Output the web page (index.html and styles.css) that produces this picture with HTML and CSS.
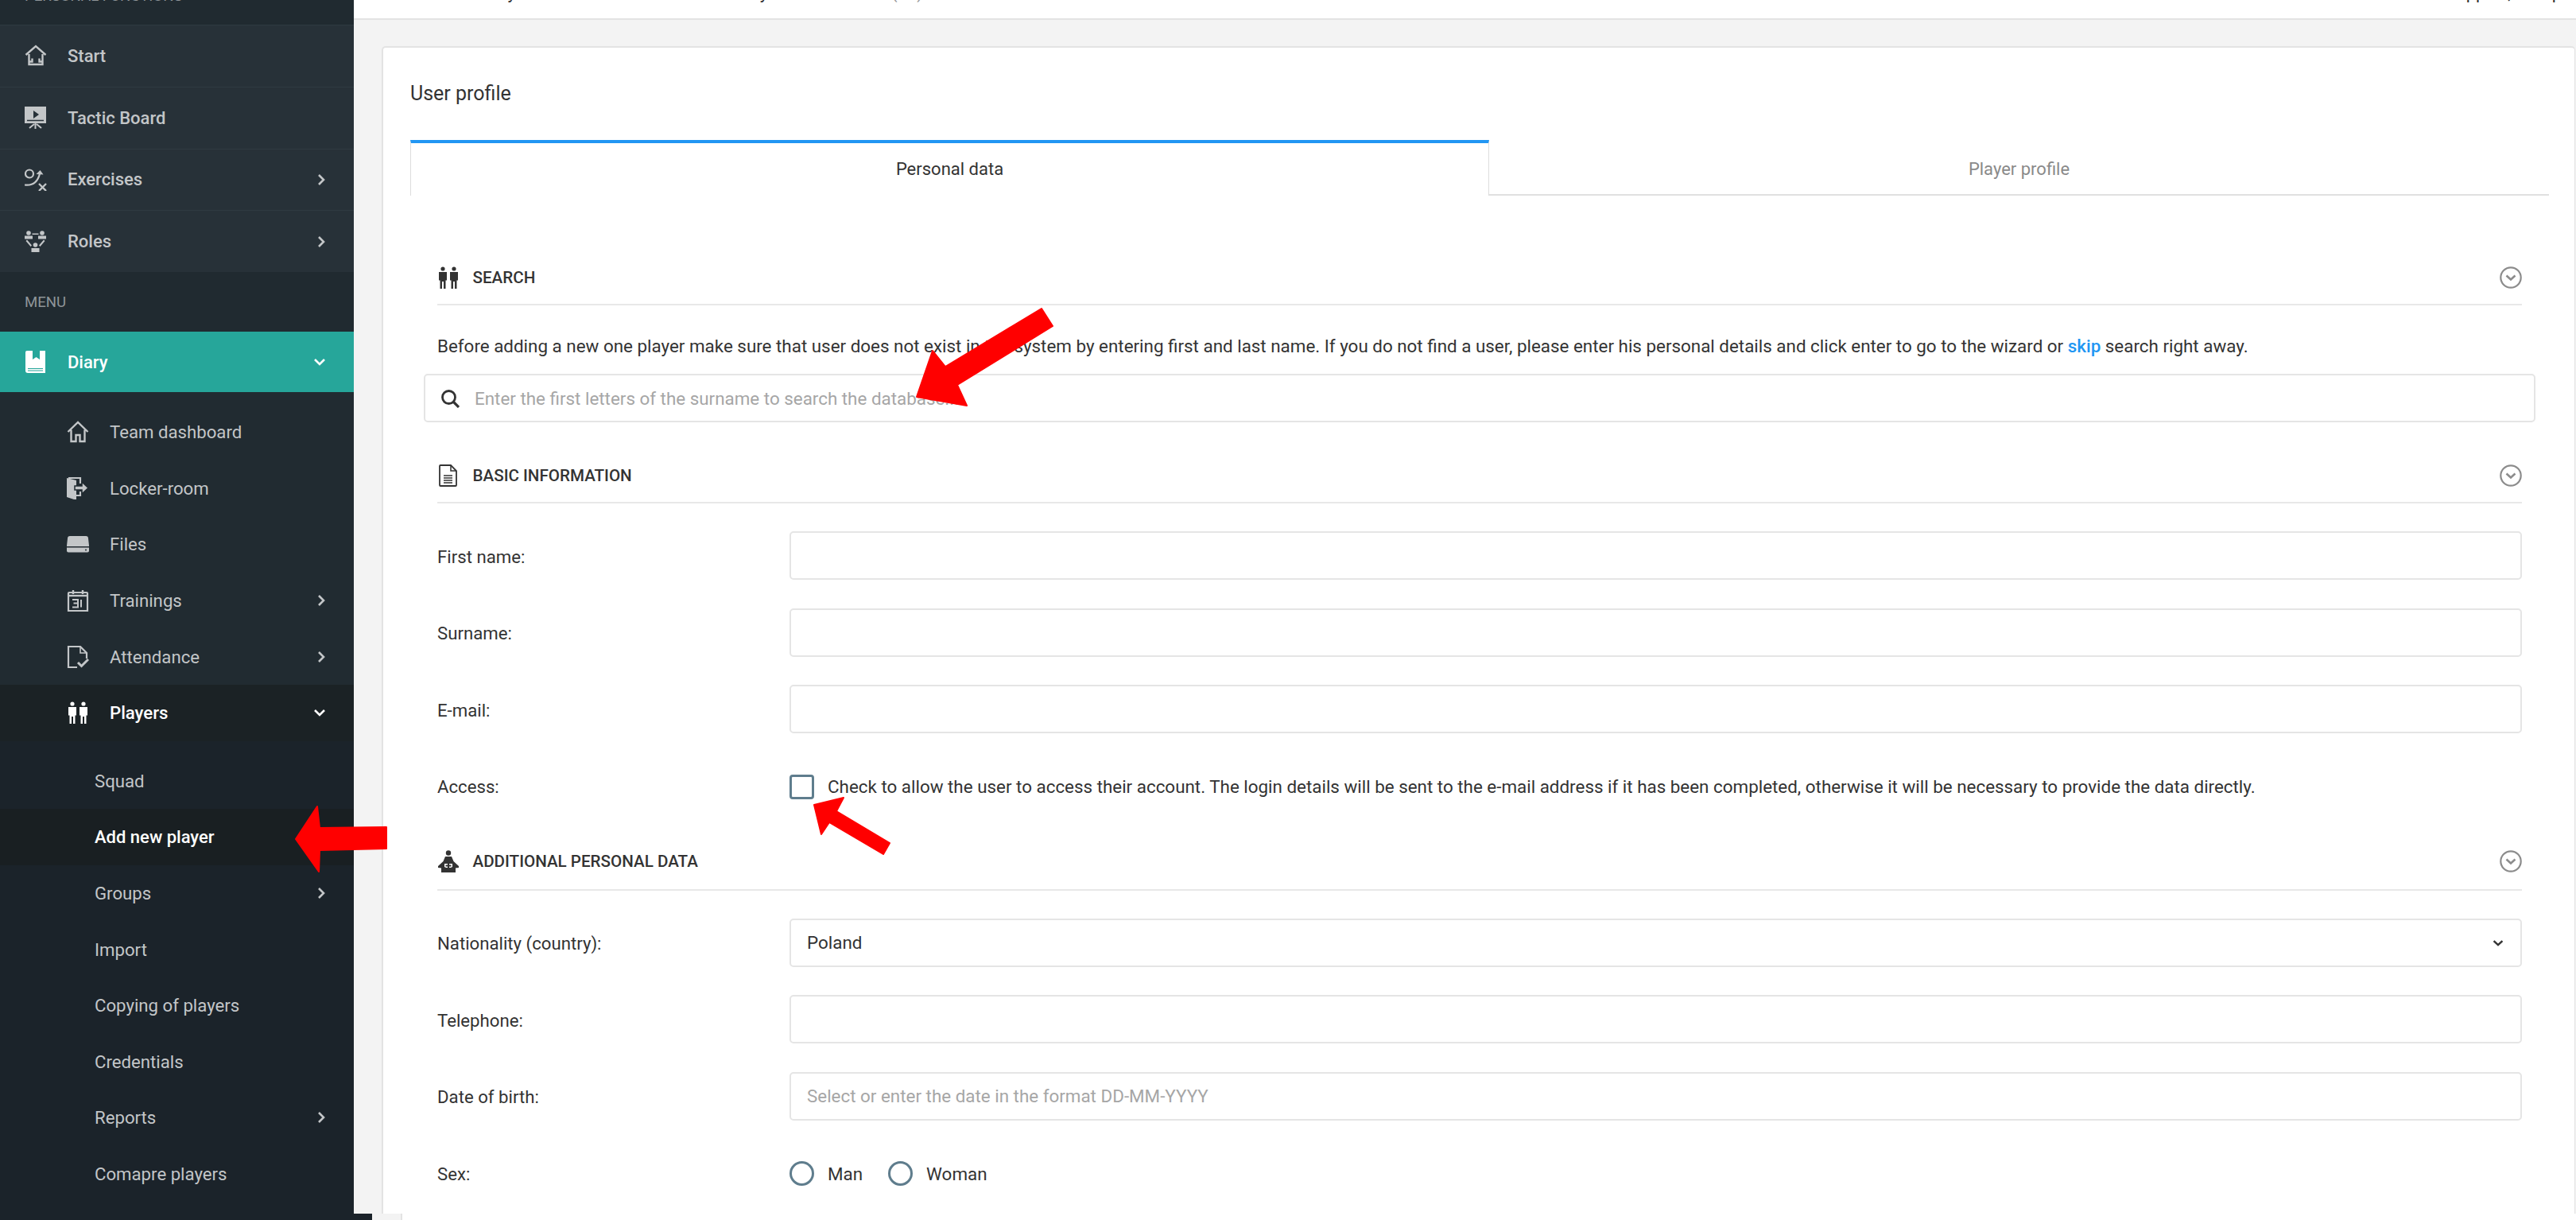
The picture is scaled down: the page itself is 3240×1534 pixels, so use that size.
FILE: index.html
```html
<!DOCTYPE html>
<html lang="en">
<head>
    <meta charset="UTF-8">
    <title>User profile</title>
    <link rel="stylesheet" href="styles.css">
</head>
<body>
    <svg class="icon-defs" width="0" height="0">
        <symbol id="i-people" viewBox="0 0 28 28">
            <circle cx="7" cy="3" r="2.6"/><circle cx="21" cy="3" r="2.6"/>
            <path d="M2 7h10v10.500h-1.500V28H8v-9H6v9H3.500V17.500H2zM16 7h10v10.500h-1.500V28H22v-9h-2v9h-2.500V17.500H16z"/>
        </symbol>
        <symbol id="i-right" viewBox="0 0 12 18">
            <path d="M3 3l6 6-6 6" fill="none" stroke="currentColor" stroke-width="2.600"/>
        </symbol>
        <symbol id="i-down" viewBox="0 0 18 12">
            <path d="M3 3l6 6 6-6" fill="none" stroke="currentColor" stroke-width="2.600"/>
        </symbol>
        <symbol id="i-collapse" viewBox="0 0 28 28">
            <circle cx="14" cy="14" r="12.700" fill="none" stroke="#8c8c8c" stroke-width="2.200"/>
            <path d="M8.500 11.500l5.500 5 5.500-5" fill="none" stroke="#8c8c8c" stroke-width="2.600"/>
        </symbol>
    </svg>

    <div class="layout">
        <aside class="sidebar">
            <div class="nav-head nav-head-cut"><span>PERSONAL FUNCTIONS</span></div>
            <a class="nav-item">
                <svg class="nav-icon" viewBox="0 0 28 28"><path d="M1.500 13L14 2l12.500 11M5.500 12v13h17V12M5.500 21.500h4v-4M22.500 21.500h-4v-4" fill="none" stroke="currentColor" stroke-width="2.400"/></svg>
                <span>Start</span>
            </a>
            <a class="nav-item">
                <svg class="nav-icon" viewBox="0 0 28 28"><path d="M0 0h27v21H0z" fill="currentColor"/><path d="M11 5l7 5-7 5z" fill="#273138"/><path d="M3 17.500h21" stroke="#273138" stroke-width="1.500"/><path d="M13.500 21v7M12 22l-6 5M15 22l6 5" stroke="currentColor" stroke-width="2" fill="none"/></svg>
                <span>Tactic Board</span>
            </a>
            <a class="nav-item">
                <svg class="nav-icon" viewBox="0 0 28 28"><circle cx="6" cy="6.500" r="5" fill="none" stroke="currentColor" stroke-width="2.200"/><path d="M0 20.500c8 1 16-2 19-14" fill="none" stroke="currentColor" stroke-width="2.200"/><path d="M14.500 7l5-5 4 5.500z" fill="currentColor"/><path d="M18 19l9 9M27 19l-9 9" stroke="currentColor" stroke-width="2.400"/></svg>
                <span>Exercises</span>
                <svg class="nav-arrow"><use href="#i-right"/></svg>
            </a>
            <a class="nav-item">
                <svg class="nav-icon" viewBox="0 0 28 28"><g fill="currentColor"><circle cx="5" cy="3" r="2.800"/><circle cx="22" cy="3" r="2.800"/><circle cx="13.500" cy="18" r="2.800"/><path d="M0 6.500h10v4H0zM17 6.500h10v4H17zM8.500 22h10v5h-10z"/><path d="M9.500 3.500h8v1.500h-8zM3 11.500l6 7-1.500 1.500-6-7zM24 11.500l-6 7 1.500 1.500 6-7z"/></g></svg>
                <span>Roles</span>
                <svg class="nav-arrow"><use href="#i-right"/></svg>
            </a>
            <div class="nav-head"><span>MENU</span></div>
            <a class="nav-item nav-item-open">
                <svg class="nav-icon" viewBox="0 0 28 28"><path d="M3 0h23v28H4a3 3 0 0 1-3-3V2a2 2 0 0 1 2-2z" fill="#fff"/><path d="M10 0h9v11l-4.500-3-4.500 3z" fill="#26a69a"/><path d="M4 22.500h19M4 25h19" stroke="#26a69a" stroke-width="1.200"/></svg>
                <span>Diary</span>
                <svg class="nav-arrow-down"><use href="#i-down"/></svg>
            </a>
            <div class="sub-nav">
                <a class="sub-item">
                    <svg class="nav-icon" viewBox="0 0 28 28"><path d="M1.500 14L14 2l12.500 12M5.500 11.500V26h6v-8h5v8h6V11.500" fill="none" stroke="currentColor" stroke-width="2.400"/></svg>
                    <span>Team dashboard</span>
                </a>
                <a class="sub-item">
                    <svg class="nav-icon" viewBox="0 0 28 28"><path d="M0 1v24l12 4V4z" fill="currentColor"/><path d="M2 1h15v7M17 18v5h-5" fill="none" stroke="currentColor" stroke-width="2.200"/><path d="M10 11h9V6l8 7.500-8 7.500v-5h-9z" fill="currentColor" stroke="#212b31" stroke-width="1.500"/></svg>
                    <span>Locker-room</span>
                </a>
                <a class="sub-item">
                    <svg class="nav-icon" viewBox="0 0 28 28"><path d="M4 4h20a3 3 0 0 1 3 3l1 9v1H0v-1l1-9a3 3 0 0 1 3-3z" fill="currentColor"/><path d="M0 18.500h28v4a2 2 0 0 1-2 2H2a2 2 0 0 1-2-2z" fill="currentColor"/><circle cx="24" cy="21.500" r="1" fill="#212b31"/></svg>
                    <span>Files</span>
                </a>
                <a class="sub-item sub-item-arrow">
                    <svg class="nav-icon" viewBox="0 0 28 28"><path d="M3 4h22a1 1 0 0 1 1 1v22H2V5a1 1 0 0 1 1-1z" fill="none" stroke="currentColor" stroke-width="2.200"/><path d="M8 1v5M20 1v5" stroke="currentColor" stroke-width="2.400"/><path d="M2 8h24" stroke="currentColor" stroke-width="2.400"/><path d="M7 13h7v9.500H7M8.500 17.500H14M18 13v9.500" fill="none" stroke="currentColor" stroke-width="2"/></svg>
                    <span>Trainings</span>
                    <svg class="nav-arrow"><use href="#i-right"/></svg>
                </a>
                <a class="sub-item sub-item-arrow">
                    <svg class="nav-icon" viewBox="0 0 28 28"><path d="M13 27H2V1h15l8 8v7" fill="none" stroke="currentColor" stroke-width="2.200"/><path d="M17 1v8h8" fill="none" stroke="currentColor" stroke-width="1.600"/><path d="M14 21l4.500 4.500L27 17" fill="none" stroke="currentColor" stroke-width="3"/></svg>
                    <span>Attendance</span>
                    <svg class="nav-arrow"><use href="#i-right"/></svg>
                </a>
                <a class="sub-item sub-item-current">
                    <svg class="nav-icon"><use href="#i-people"/></svg>
                    <span>Players</span>
                    <svg class="nav-arrow-down"><use href="#i-down"/></svg>
                </a>
                <div class="sub-sub-nav">
                    <a class="leaf-item"><span>Squad</span></a>
                    <a class="leaf-item leaf-item-active"><span>Add new player</span></a>
                    <a class="leaf-item"><span>Groups</span><svg class="nav-arrow"><use href="#i-right"/></svg></a>
                    <a class="leaf-item"><span>Import</span></a>
                    <a class="leaf-item"><span>Copying of players</span></a>
                    <a class="leaf-item"><span>Credentials</span></a>
                    <a class="leaf-item"><span>Reports</span><svg class="nav-arrow"><use href="#i-right"/></svg></a>
                    <a class="leaf-item"><span>Comapre players</span></a>
                </div>
            </div>
        </aside>

        <main class="main">
            <header class="topbar">
                <div class="crumbs">
                    <span class="crumb-a">Diary</span>
                    <span class="crumb-b">Team Diary</span>
                    <span class="crumb-c">(12)</span>
                </div>
                <span class="top-help">Support, Help</span>
            </header>

            <div class="card">
                <h1 class="card-title">User profile</h1>
                <div class="tabs">
                    <div class="tab tab-active">Personal data</div>
                    <div class="tab tab-other">Player profile</div>
                </div>

                <section class="section">
                    <div class="section-head">
                        <svg class="head-icon"><use href="#i-people"/></svg>
                        <span class="head-text">SEARCH</span>
                        <svg class="head-toggle"><use href="#i-collapse"/></svg>
                    </div>
                    <p class="search-note">Before adding a new one player make sure that user does not exist in the system by entering first and last name. If you do not find a user, please enter his personal details and click enter to go to the wizard or <a class="link">skip</a> search right away.</p>
                    <div class="search-box">
                        <svg class="search-icon" viewBox="0 0 24 24"><circle cx="10.500" cy="10.500" r="8" fill="none" stroke="#333" stroke-width="2.800"/><path d="M16 16l7 7" stroke="#333" stroke-width="3.200"/></svg>
                        <input class="search-input" type="text" placeholder="Enter the first letters of the surname to search the database...">
                    </div>

                    <div class="section-head section-head-next">
                        <svg class="head-icon" viewBox="0 0 28 28"><path d="M4 1h13l7 7v18a1 1 0 0 1-1 1H4a1 1 0 0 1-1-1V2a1 1 0 0 1 1-1z" fill="none" stroke="#333" stroke-width="1.800"/><path d="M17 1v7h7" fill="none" stroke="#333" stroke-width="1.500"/><path d="M8 14h11M8 17h11M8 20h11M8 23h11" stroke="#333" stroke-width="1.500"/></svg>
                        <span class="head-text">BASIC INFORMATION</span>
                        <svg class="head-toggle"><use href="#i-collapse"/></svg>
                    </div>
                    <div class="fields">
                        <label class="field-label">First name:</label>
                        <input class="field-input" type="text">
                        <label class="field-label">Surname:</label>
                        <input class="field-input" type="text">
                        <label class="field-label">E-mail:</label>
                        <input class="field-input" type="text">
                        <label class="field-label">Access:</label>
                        <div class="field-check">
                            <input class="check-box" type="checkbox">
                            <span>Check to allow the user to access their account. The login details will be sent to the e-mail address if it has been completed, otherwise it will be necessary to provide the data directly.</span>
                        </div>
                    </div>

                    <div class="section-head section-head-last">
                        <svg class="head-icon" viewBox="0 0 28 28"><circle cx="14" cy="3.500" r="3.200" fill="#333"/><path d="M10 8h8l2.500 6L27 20v2l-4 .5V28H5v-5.500L1 22v-2l6.500-6z" fill="#333"/><path d="M9 17h10v4l-2 1h-6l-2-1z" fill="#fff"/><path d="M14 16v8M10.500 19.500h7" stroke="#333" stroke-width="2"/></svg>
                        <span class="head-text">ADDITIONAL PERSONAL DATA</span>
                        <svg class="head-toggle"><use href="#i-collapse"/></svg>
                    </div>
                    <div class="fields">
                        <label class="field-label">Nationality (country):</label>
                        <div class="select-wrap">
                            <select class="field-input field-select"><option>Poland</option></select>
                            <svg class="select-arrow" viewBox="0 0 18 12"><path d="M2.500 2.500L9 8.500l6.500-6" fill="none" stroke="#333" stroke-width="3"/></svg>
                        </div>
                        <label class="field-label">Telephone:</label>
                        <input class="field-input" type="text">
                        <label class="field-label">Date of birth:</label>
                        <input class="field-input" type="text" placeholder="Select or enter the date in the format DD-MM-YYYY">
                        <label class="field-label">Sex:</label>
                        <div class="field-radios">
                            <input class="radio-dot" type="radio" name="sex"><span>Man</span>
                            <input class="radio-dot radio-second" type="radio" name="sex"><span>Woman</span>
                        </div>
                    </div>
                </section>
            </div>
        </main>
    </div>

    <div class="bottom-strip">
        <div class="strip-dark"></div>
        <div class="strip-gray"></div>
    </div>

    <!-- red annotation arrows drawn over the screenshot -->
    <svg class="arrows" viewBox="0 0 3240 1534">
        <polygon points="1153,499 1173,441 1189,461 1310,388 1324,410 1204,484 1216,510"/>
        <polygon points="1024,1012 1061,1003 1052,1020 1119,1060 1111,1074 1043,1034 1033,1049"/>
        <polygon points="372,1055 399,1014 402,1041 486,1040 486,1067 402,1069 401,1096"/>
    </svg>
</body>
</html>
```

FILE: styles.css
```css
html, body {
    margin: 0;
    padding: 0;
    height: 1534px;
    overflow: hidden;
    background: #fff;
}
body {
    position: relative;
    font-family: Roboto, "Liberation Sans", sans-serif;
    font-size: 22px;
    color: #333;
}
.icon-defs {
    position: absolute;
}
.layout {
    display: flex;
    height: 1526px;
    overflow: hidden;
}

/* sidebar */
.sidebar {
    width: 445px;
    flex: none;
    background: #1b232a;
    color: #c3c6c8;
    font-size: 22.200px;
    overflow: hidden;
}
.nav-head {
    height: 75px;
    box-sizing: border-box;
    padding-left: 31px;
    display: flex;
    align-items: center;
    background: #202a30;
    color: #8f9599;
    font-size: 18.600px;
}
.nav-head-cut {
    height: 31px;
    align-items: flex-start;
}
.nav-head-cut span {
    margin-top: -15px;
    line-height: 20px;
}
.nav-item {
    height: 77.750px;
    box-sizing: border-box;
    border-top: 1px solid #2f3a41;
    background: #273138;
    display: flex;
    align-items: center;
    padding-left: 31px;
    font-weight: 500;
    font-size: 22px;
}
.nav-icon {
    width: 28px;
    height: 28px;
    flex: none;
    margin-right: 26px;
    fill: currentColor;
}
.nav-arrow {
    width: 12px;
    height: 18px;
    margin-left: auto;
    margin-right: 35px;
}
.nav-arrow-down {
    width: 18px;
    height: 12px;
    margin-left: auto;
    margin-right: 34px;
}
.nav-item-open {
    height: 76px;
    border-top: 0;
    background: #26a69a;
    color: #fff;
}
.sub-nav {
    background: #212b31;
    padding-top: 15px;
}
.sub-item {
    height: 70.600px;
    display: flex;
    align-items: center;
    padding-left: 84px;
}
.sub-item .nav-icon {
    margin-right: 26px;
}
.sub-item-current {
    background: #1b2225;
    color: #fff;
    font-weight: 500;
}
.sub-sub-nav {
    background: #1b232a;
    padding: 15px 0 13px;
}
.leaf-item {
    height: 70.600px;
    display: flex;
    align-items: center;
    padding-left: 119px;
}
.leaf-item-active {
    background: #191f22;
    color: #fff;
    font-weight: 500;
    font-size: 22px;
}

/* main column */
.main {
    flex: 1;
    min-width: 0;
    background: #f3f3f3;
}
.topbar {
    height: 23px;
    background: #fff;
    border-bottom: 2px solid #e3e3e3;
    overflow: hidden;
    display: flex;
    justify-content: space-between;
}
.crumbs {
    display: flex;
    margin-top: -20px;
    line-height: 22px;
}
.crumb-a {
    margin-left: 154px;
}
.crumb-b {
    margin-left: 207px;
}
.crumb-c {
    margin-left: 155px;
    color: #999;
}
.top-help {
    margin-top: -20px;
    line-height: 22px;
    margin-right: 18px;
    word-spacing: 13px;
}
.card {
    margin: 33px 1px 0 35px;
    height: 1500px;
    box-sizing: border-box;
    background: #fff;
    border: 1px solid #e3e3e3;
    border-width: 2px 1px 0 2px;
    border-radius: 5px 5px 0 0;
    padding: 0 32px 0 34px;
}
.card-title {
    margin: 0;
    height: 116px;
    box-sizing: border-box;
    padding-top: 41px;
    font-size: 25px;
    line-height: 34px;
    font-weight: 400;
}
.tabs {
    display: flex;
    height: 70px;
}
.tab {
    box-sizing: border-box;
    display: flex;
    align-items: center;
    justify-content: center;
}
.tab-active {
    width: 1357px;
    flex: none;
    border-top: 4px solid #2196f3;
    border-left: 1px solid #ddd;
    border-right: 1px solid #ddd;
    padding-bottom: 2px;
}
.tab-other {
    flex: 1;
    color: #8a8a8a;
    border-bottom: 2px solid #e0e0e0;
    padding-top: 4px;
}

/* form sections */
.section {
    padding: 70px 34px 0;
}
.section-head {
    height: 68px;
    box-sizing: border-box;
    display: flex;
    align-items: center;
    border-bottom: 2px solid #e8e8e8;
}
.section-head-next {
    margin-top: 34px;
}
.section-head-last {
    margin-top: 33px;
    padding-bottom: 4px;
}
.head-icon {
    width: 28px;
    height: 28px;
    flex: none;
    fill: #333;
    margin-right: 16.500px;
}
.head-text {
    font-size: 20.600px;
    font-weight: 500;
}
.head-toggle {
    width: 28px;
    height: 28px;
    margin-left: auto;
}
.search-note {
    margin: 36px 0 20px;
    line-height: 30px;
    font-size: 22.400px;
    white-space: nowrap;
}
.link {
    color: #2196f3;
    font-weight: 500;
}
.search-box {
    margin: 0 -17px;
    height: 61px;
    box-sizing: border-box;
    border: 2px solid #e5e5e5;
    border-radius: 5px;
    display: flex;
    align-items: center;
    padding-left: 19px;
}
.search-icon {
    width: 24px;
    height: 24px;
    flex: none;
    margin-right: 19px;
}
.search-input {
    flex: 1;
    border: 0;
    outline: 0;
    padding: 0;
    font: inherit;
    font-size: 22.400px;
}
input::placeholder {
    color: #a6a6a6;
    opacity: 1;
}
.fields {
    display: grid;
    grid-template-columns: 443px 1fr;
    grid-auto-rows: 61px;
    row-gap: 35.500px;
    align-items: center;
    margin-top: 35px;
}
.field-label {
    color: #333;
    font-size: 22.200px;
    padding-top: 2px;
}
.field-input {
    width: 100%;
    height: 61px;
    box-sizing: border-box;
    border: 2px solid #e5e5e5;
    border-radius: 5px;
    background: #fff;
    padding: 0 20px;
    font: inherit;
    font-size: 22.400px;
    color: #333;
    outline: 0;
}
.select-wrap {
    position: relative;
}
.field-select {
    appearance: none;
}
.select-arrow {
    position: absolute;
    right: 22px;
    top: 26px;
    width: 16px;
    height: 10px;
}
.field-check, .field-radios {
    display: flex;
    align-items: center;
    font-size: 22.400px;
    padding-top: 2px;
}
.check-box, .radio-dot {
    appearance: none;
    width: 31px;
    height: 31px;
    box-sizing: border-box;
    margin: 0 17px 0 0;
    border: 3px solid #5f7d8d;
    border-radius: 4px;
    background: #fff;
    flex: none;
}
.radio-dot {
    border-radius: 50%;
}
.radio-second {
    margin-left: 32px;
}

/* leftover of the captured page at the very bottom */
.bottom-strip {
    display: flex;
    height: 8px;
}
.strip-dark {
    width: 468px;
    background: #1b232a;
}
.strip-gray {
    width: 36px;
    background: #f3f3f3;
    border-right: 2px solid #e3e3e3;
}

.arrows {
    position: absolute;
    left: 0;
    top: 0;
    width: 3240px;
    height: 1534px;
    fill: #f00;
    stroke: #f00;
    stroke-width: 2;
    stroke-linejoin: round;
    pointer-events: none;
}
```
